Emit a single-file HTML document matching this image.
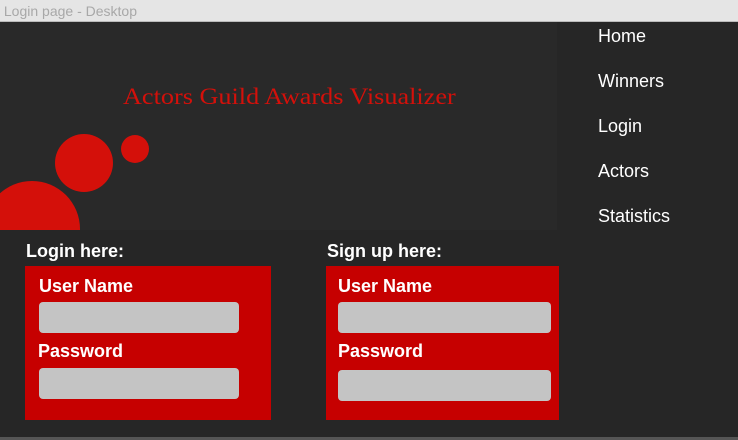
<!DOCTYPE html><html><head><style>
body{margin:0;width:738px;height:440px;background:#262626;position:relative;overflow:hidden;font-family:"Liberation Sans",sans-serif}
.a{position:absolute}
.top{left:0;top:0;width:738px;height:21px;background:#e5e5e5;border-bottom:1px solid #bbb;color:#a8a8a8;font-size:14px;line-height:22px}
.hero{left:0;top:22px;width:557px;height:208px;background:#292929;overflow:hidden}
.c{position:absolute;border-radius:50%;background:#d4100a}
.nav{color:#fff;font-size:18px;left:598px}
.box{background:#c60000;top:266px;height:154px}
.lbl{color:#fff;font-size:18px;font-weight:bold}
.in{background:#c4c4c4;border-radius:4px;height:31px}
.bot{left:0;top:437px;width:738px;height:3px;background:#555}
</style></head><body>
<div class="a top">&nbsp;Login page - Desktop</div>
<div class="a hero">
<div class="c" style="left:-16px;top:159px;width:96px;height:96px"></div>
<div class="c" style="left:55px;top:112px;width:58px;height:58px"></div>
<div class="c" style="left:121px;top:113px;width:28px;height:28px"></div>
<div class="a" style="left:123px;top:62px;color:#d4100a;font-family:'Liberation Serif',serif;font-size:23px;transform:scaleX(1.14);transform-origin:0 0;white-space:nowrap">Actors Guild Awards Visualizer</div>
</div>
<div class="a nav" style="top:26px">Home</div>
<div class="a nav" style="top:71px">Winners</div>
<div class="a nav" style="top:116px">Login</div>
<div class="a nav" style="top:161px">Actors</div>
<div class="a nav" style="top:206px">Statistics</div>
<div class="a lbl" style="left:26px;top:241px">Login here:</div>
<div class="a lbl" style="left:327px;top:241px">Sign up here:</div>
<div class="a box" style="left:25px;width:246px"></div>
<div class="a box" style="left:326px;width:233px"></div>
<div class="a lbl" style="left:39px;top:276px">User Name</div>
<div class="a in" style="left:39px;top:302px;width:200px"></div>
<div class="a lbl" style="left:38px;top:341px">Password</div>
<div class="a in" style="left:39px;top:368px;width:200px"></div>
<div class="a lbl" style="left:338px;top:276px">User Name</div>
<div class="a in" style="left:338px;top:302px;width:213px"></div>
<div class="a lbl" style="left:338px;top:341px">Password</div>
<div class="a in" style="left:338px;top:370px;width:213px"></div>
<div class="a bot"></div>
</body></html>
